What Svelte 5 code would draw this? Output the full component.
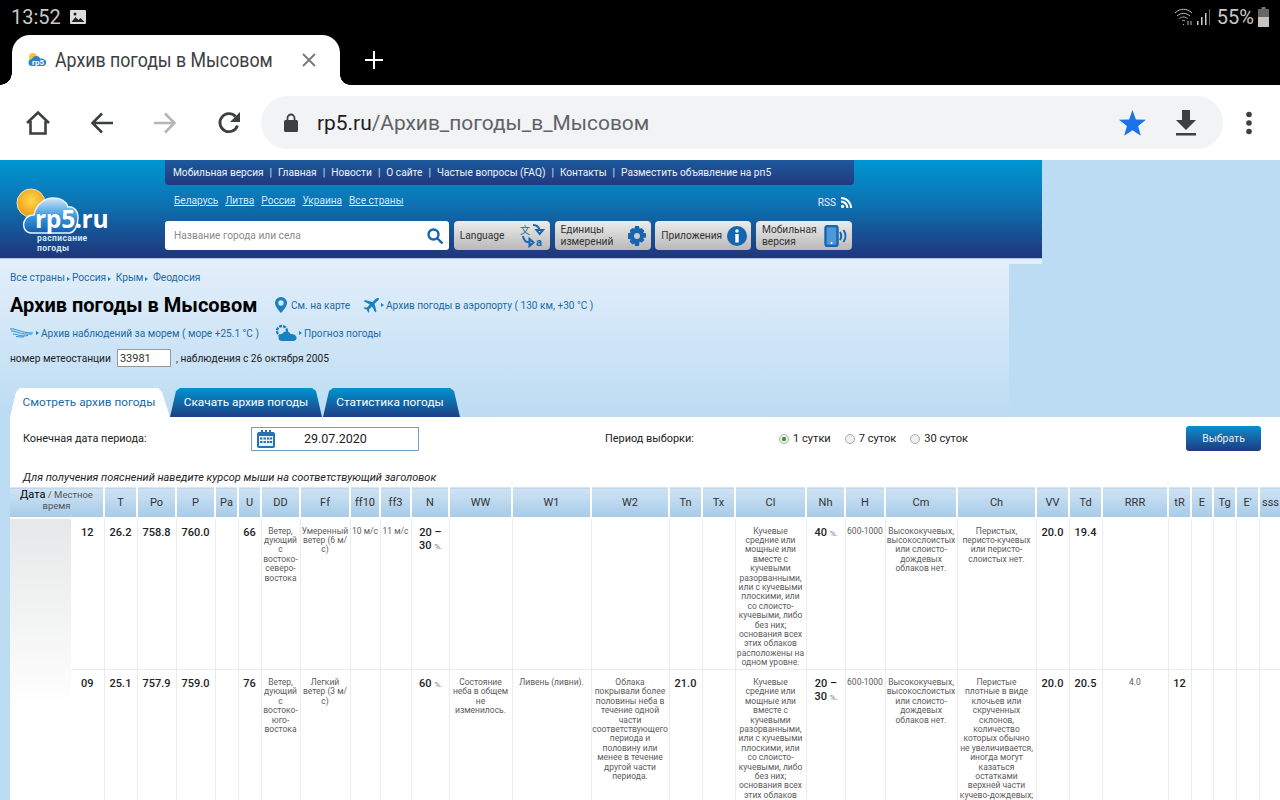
<script>
  const cols = [61, 33, 33, 39, 39, 23, 23, 39, 50, 30, 31, 38, 63, 79, 78, 33, 33, 71, 39, 40, 72, 79, 33, 33, 66, 23, 22, 23, 23, 23];
  const heads = ['T', 'Po', 'P', 'Pa', 'U', 'DD', 'Ff', 'ff10', 'ff3', 'N', 'WW', 'W1', 'W2', 'Tn', 'Tx', 'Cl', 'Nh', 'H', 'Cm', 'Ch', 'VV', 'Td', 'RRR', 'tR', 'E', 'Tg', "E'", 'sss'];

  const cl = 'Кучевые\nсредние или\nмощные или\nвместе с\nкучевыми\nразорванными,\nили с кучевыми\nплоскими, или\nсо слоисто-\nкучевыми, либо\nбез них;\nоснования всех\nэтих облаков\nрасположены на\nодном уровне.';
  const cm = 'Высококучевых,\nвысокослоистых\nили слоисто-\nдождевых\nоблаков нет.';

  // b: bold value, p: bold value with a small percent sign, anything else is small text
  const rows = [
    { hour: '12', height: 152, cells: [
      { b: '26.2' }, { b: '758.8' }, { b: '760.0' }, {}, { b: '66' },
      { t: 'Ветер,\nдующий\nс\nвостоко-\nсеверо-\nвостока' },
      { t: 'Умеренный\nветер (6 м/\nс)' },
      { t: '10 м/с' }, { t: '11 м/с' },
      { p: '20 –\n30' }, {}, {}, {}, {}, {},
      { t: cl }, { p: '40' }, { t: '600-1000' }, { t: cm },
      { t: 'Перистых,\nперисто-кучевых\nили перисто-\nслоистых нет.' },
      { b: '20.0' }, { b: '19.4' }, {}, {}, {}, {}, {}, {}
    ] },
    { hour: '09', height: 240, cells: [
      { b: '25.1' }, { b: '757.9' }, { b: '759.0' }, {}, { b: '76' },
      { t: 'Ветер,\nдующий\nс\nвостоко-\nюго-\nвостока' },
      { t: 'Легкий\nветер (3 м/\nс)' },
      {}, {},
      { p: '60' },
      { t: 'Состояние\nнеба в общем\nне\nизменилось.' },
      { t: 'Ливень (ливни).' },
      { t: 'Облака\nпокрывали более\nполовины неба в\nтечение одной\nчасти\nсоответствующего\nпериода и\nполовину или\nменее в течение\nдругой части\nпериода.' },
      { b: '21.0' }, {},
      { t: cl }, { p: '20 –\n30' }, { t: '600-1000' }, { t: cm },
      { t: 'Перистые\nплотные в виде\nклочьев или\nскрученных\nсклонов,\nколичество\nкоторых обычно\nне увеличивается,\nиногда могут\nказаться\nостатками\nверхней части\nкучево-дождевых;' },
      { b: '20.0' }, { b: '20.5' }, { t: '4.0' }, { b: '12' }, {}, {}, {}, {}
    ] }
  ];

  const topLinks = ['Мобильная версия', 'Главная', 'Новости', 'О сайте', 'Частые вопросы (FAQ)', 'Контакты', 'Разместить объявление на рп5'];
  const countries = ['Беларусь', 'Литва', 'Россия', 'Украина', 'Все страны'];
</script>

<div class="screen">
  <div class="status">
    <span class="clock">13:52</span>
    <svg width="16" height="14" viewBox="0 0 16 14"><rect width="16" height="14" rx="1" fill="#ddd"/><path d="M1.5 12l4-5 3 3 2-2 4 4z" fill="#222"/><circle cx="5" cy="4" r="1.5" fill="#222"/></svg>
    <span class="grow"></span>
    <svg width="20" height="20" viewBox="0 0 20 20" fill="none" stroke="#bbb" stroke-width="1"><path d="M1 6c5-5 12-5 17 0M3 9c4-3.500 9-3.500 13 0M5.500 11.500c2.500-2 5.500-2 8 0M8 14c1-.8 2-.8 3 0"/><path d="M9.500 17v1M14 14v4M17 14v4" stroke-width="1"/></svg>
    <svg class="bars" width="14" height="18" viewBox="0 0 14 18"><rect x="0" y="13" width="1.500" height="4" fill="#ccc"/><rect x="4" y="9" width="1.500" height="8" fill="#ccc"/><rect x="8" y="5" width="1.500" height="12" fill="#ccc"/><rect x="12" y="1" width="1" height="16" fill="#666"/></svg>
    <span class="pct">55%</span>
    <svg width="11" height="20" viewBox="0 0 11 20"><rect x="3.500" y="0" width="4" height="2" fill="#777"/><rect x="0" y="2" width="11" height="8" fill="#666"/><rect x="0" y="10" width="11" height="10" fill="#c4c4c4"/></svg>
  </div>

  <div class="tabstrip">
    <div class="browser-tab">
      <svg width="20" height="16" viewBox="0 0 20 16"><circle cx="5" cy="5" r="4" fill="#f4c23c"/><path d="M4 14a3.500 3.500 0 0 1 0-7c1-3.500 7-4 8-.5 4-.5 7 2 6 5-.5 2-2 2.500-3 2.500z" fill="#2c83c6"/><text x="4" y="13" class="fav">rp5</text></svg>
      <span class="tab-title">Архив погоды в Мысовом</span>
      <svg class="tab-x" width="14" height="14" viewBox="0 0 14 14" stroke="#777" stroke-width="1.800"><path d="M1 1l12 12M13 1L1 13"/></svg>
    </div>
    <svg class="plus" width="18" height="18" viewBox="0 0 18 18" stroke="#fff" stroke-width="2"><path d="M9 0v18M0 9h18"/></svg>
  </div>

  <div class="toolbar">
    <svg class="t-home" width="26" height="26" viewBox="0 0 26 26" fill="none" stroke="#3c4043" stroke-width="2.600"><path d="M2 13L13 2.500 24 13M5.500 11v12.500h15V11"/></svg>
    <svg class="t-back" width="24" height="22" viewBox="0 0 24 22" fill="none" stroke="#3c4043" stroke-width="2.600"><path d="M23 11H3M12 1.500L2.500 11l9.500 9.500"/></svg>
    <svg class="t-fwd" width="24" height="22" viewBox="0 0 24 22" fill="none" stroke="#b4b5b7" stroke-width="2.600"><path d="M1 11h20M12 1.500l9.500 9.500-9.500 9.500"/></svg>
    <svg class="t-reload" width="24" height="24" viewBox="0 0 24 24" fill="none"><path d="M20.500 14.500A9 9 0 1 1 18.500 5.500" stroke="#3c4043" stroke-width="2.800"/><path d="M23 1v10H13z" fill="#3c4043"/></svg>
    <div class="omnibox">
      <svg width="14" height="19" viewBox="0 0 14 19"><path d="M3.500 7V5a3.500 3.500 0 0 1 7 0v2" fill="none" stroke="#3c4043" stroke-width="1.800"/><rect y="7" width="14" height="12" rx="1.500" fill="#3c4043"/></svg>
      <span class="url"><b>rp5.ru</b>/Архив_погоды_в_Мысовом</span>
      <span class="grow"></span>
      <svg class="star" width="27" height="26" viewBox="0 0 24 23"><path d="M12 0l3 8.300 9 .4-7 5.500 2.400 8.700L12 18l-7.400 4.900L7 14.200 0 8.700l9-.4z" fill="#1a73e8"/></svg>
      <svg class="dl" width="20" height="26" viewBox="0 0 20 26" fill="#3c4043"><path d="M6 0h8v10h6l-10 10L0 10h6z"/><rect y="23" width="20" height="2.500"/></svg>
    </div>
    <svg class="t-dots" width="8" height="24" viewBox="0 0 8 24" fill="#3c4043"><circle cx="4" cy="3.500" r="2.800"/><circle cx="4" cy="12" r="2.800"/><circle cx="4" cy="20.500" r="2.800"/></svg>
  </div>

  <div class="site">
    <header class="head">
      <div class="logo">
        <svg width="90" height="62" viewBox="0 0 90 62">
          <defs>
            <radialGradient id="sun" cx="0.5" cy="0.4" r="0.6"><stop offset="0" stop-color="#ffd84a"/><stop offset="1" stop-color="#ee9a16"/></radialGradient>
            <linearGradient id="cloud" x1="0" y1="0" x2="0" y2="1"><stop offset="0" stop-color="#cfe6f8"/><stop offset="0.5" stop-color="#3f9be0"/><stop offset="1" stop-color="#0f5fb0"/></linearGradient>
          </defs>
          <circle cx="20" cy="16" r="14" fill="url(#sun)" stroke="#f6e6a8" stroke-width="1"/>
          <path d="M21 46C13 46 11 38 14 33c2-4 5-5 9-5 2-10 10-17 19-17 7 0 13 3 15 9 5-1 10 3 10 11 0 8-4 15-9 15z" fill="url(#cloud)" stroke="#e8f4fd" stroke-width="1.500"/>
        </svg>
        <span class="logo-name">rp5.ru</span>
        <span class="logo-sub">расписание<br>погоды</span>
      </div>
      <div class="head-main">
        <nav class="topnav">
          {#each topLinks as link, i}
            {#if i > 0}<span class="sep">|</span>{/if}
            <span>{link}</span>
          {/each}
        </nav>
        <div class="countries">
          {#each countries as c}<span class="country">{c}</span>{/each}
          <span class="grow"></span>
          <span class="rss">RSS</span>
          <svg width="11" height="11" viewBox="0 0 11 11" fill="#fff"><circle cx="1.600" cy="9.400" r="1.600"/><path d="M0 3.500a7.500 7.500 0 0 1 7.500 7.500H5.400A5.400 5.400 0 0 0 0 5.600zM0 0a11 11 0 0 1 11 11H9A9 9 0 0 0 0 2z"/></svg>
        </div>
        <div class="tools">
          <div class="search">
            <span class="ph">Название города или села</span>
            <svg width="16" height="16" viewBox="0 0 16 16" fill="none" stroke="#1565b0" stroke-width="2.400"><circle cx="6.500" cy="6.500" r="5"/><path d="M10 10l5.500 5.500"/></svg>
          </div>
          <div class="tool">
            <span class="tool-label">Language</span>
            <svg width="26" height="25" viewBox="0 0 26 25" fill="none" stroke="#1565b0" stroke-width="2"><text x="0" y="11" class="lang-zi">文</text><path d="M13 2c3.500 0 6 2 6.500 5.500M16.500 7H23l-3.300 4zM3 13c.5 4 3 6.500 7 6.500M9.500 16v7l4-3.500z"/><text x="16" y="23" class="lang-a">a</text></svg>
          </div>
          <div class="tool">
            <span class="tool-label two">Единицы<br>измерений</span>
            <svg width="20" height="20" viewBox="0 0 20 20"><path d="M8 0h4l.6 2.800 2-.8 2.800 2.800-1.200 2 2.800.6v4l-2.800.6 1.200 2-2.800 2.800-2-1.200L12 20H8l-.6-2.800-2 1.200-2.800-2.800 1.200-2L1 12.800V7.200l2.800-.6-1.200-2L5.400 2l2 .8z" fill="#1565b0"/><circle cx="10" cy="10" r="3" fill="#ccc"/></svg>
          </div>
          <div class="tool">
            <span class="tool-label">Приложения</span>
            <svg width="20" height="20" viewBox="0 0 20 20"><circle cx="10" cy="10" r="10" fill="#1565b0"/><circle cx="10" cy="5" r="1.800" fill="#fff"/><rect x="8.300" y="8" width="3.400" height="8.500" fill="#fff"/></svg>
          </div>
          <div class="tool">
            <span class="tool-label two">Мобильная<br>версия</span>
            <svg width="24" height="22" viewBox="0 0 24 22" fill="none"><rect x="1.500" y="1" width="12" height="20" rx="2" fill="#4f97d6" stroke="#1565b0" stroke-width="2.400"/><circle cx="7.500" cy="18" r="1" fill="#fff"/><path d="M16 7c1.500 2.500 1.500 5.500 0 8M19.500 5c2.500 3.500 2.500 8.500 0 12" stroke="#1565b0" stroke-width="2"/></svg>
          </div>
        </div>
      </div>
    </header>

    <section class="intro">
      <div class="crumbs">
        Все страны<i class="tri"></i>Россия<i class="tri"></i> Крым<i class="tri"></i> Феодосия
      </div>
      <div class="title-row">
        <h1>Архив погоды в Мысовом</h1>
        <svg class="pin" width="12" height="16" viewBox="0 0 12 16"><path fill-rule="evenodd" d="M6 0a6 6 0 0 1 6 6c0 4-6 10-6 10S0 10 0 6a6 6 0 0 1 6-6zm0 3.300a2.700 2.700 0 1 0 0 5.400 2.700 2.700 0 0 0 0-5.400z" fill="#1a80c4"/></svg>
        <span class="lnk map">См. на карте</span>
        <svg class="plane" width="16" height="15" viewBox="0 0 16 15"><path d="M16 0c-1.500-.3-3 .4-4 1.400L9.500 4 2 2 .8 3.200 6.800 6.500 4 9.500 1.500 9.300.5 10.300l3.300 1.500 1.500 3 1-1-.2-2.500 3-2.800 3.200 6 1.200-1.200-2-7.500 2.600-2.500C15.300 3 16 1.500 16 0z" fill="#1a80c4"/></svg>
        <i class="tri"></i><span class="lnk">Архив погоды в аэропорту ( 130 км, +30 °C )</span>
      </div>
      <div class="sub-row">
        <svg width="24" height="10" viewBox="0 0 24 10" fill="none" stroke="#2a8fd0" stroke-width="1"><path d="M0 1c6-1 10 4 23 4M1 3c6 0 9 4 21 3M3 6c5 0 7 3 15 1.500M6 8.500c4 0 5 1 8 .2"/></svg>
        <i class="tri"></i><span class="lnk sea">Архив наблюдений за морем ( море +25.1 °C )</span>
        <svg class="cloudy" width="22" height="18" viewBox="0 0 22 18"><circle cx="7" cy="7" r="5" fill="none" stroke="#1a80c4" stroke-width="2.400" stroke-dasharray="3 1"/><path d="M7 17a3.500 3.500 0 0 1 0-7c1-3 7-3.500 8.500 0 4-.4 6.500 2 6 4.500-.3 1.500-1.500 2.500-3 2.500z" fill="#1a80c4"/></svg>
        <i class="tri"></i><span class="lnk">Прогноз погоды</span>
      </div>
      <div class="station">
        <span>номер метеостанции</span>
        <span class="st-input">33981</span>
        <span>, наблюдения с 26 октября 2005</span>
      </div>
      <div class="tabs">
        <span class="tab active">Смотреть архив погоды</span>
        <span class="tab dl-tab">Скачать архив погоды</span>
        <span class="tab stat-tab">Статистика погоды</span>
      </div>
    </section>

    <section class="panel">
      <div class="form-row">
        <span class="f-label">Конечная дата периода:</span>
        <div class="datebox">
          <svg width="18" height="18" viewBox="0 0 18 18"><rect y="2" width="18" height="16" rx="2" fill="#2670b4"/><rect x="2" y="6" width="14" height="10" fill="#e8f2fa"/><g fill="#2670b4"><rect x="3" y="7.500" width="2.400" height="2"/><rect x="6.500" y="7.500" width="2.400" height="2"/><rect x="10" y="7.500" width="2.400" height="2"/><rect x="13" y="7.500" width="2" height="2"/><rect x="3" y="11" width="2.400" height="2"/><rect x="6.500" y="11" width="2.400" height="2"/><rect x="10" y="11" width="2.400" height="2"/><rect x="13" y="11" width="2" height="2"/><rect x="4" y="0" width="2" height="4"/><rect x="8" y="0" width="2" height="4"/><rect x="12" y="0" width="2" height="4"/></g></svg>
          <span class="date">29.07.2020</span>
        </div>
        <span class="f-label period">Период выборки:</span>
        <div class="radios">
          <span class="radio on"><i></i>1 сутки</span>
          <span class="radio"><i></i>7 суток</span>
          <span class="radio"><i></i>30 суток</span>
        </div>
        <span class="grow"></span>
        <span class="go">Выбрать</span>
      </div>
      <p class="hint">Для получения пояснений наведите курсор мыши на соответствующий заголовок</p>

      <table>
        <colgroup>
          {#each cols as w}<col style="width:{w}px">{/each}
        </colgroup>
        <thead>
          <tr>
            <th colspan="2" class="date-head"><b>Дата</b> <span>/ Местное<br>время</span></th>
            {#each heads as h}<th>{h}</th>{/each}
          </tr>
        </thead>
        <tbody>
          {#each rows as row, r}
            <tr style="height:{row.height}px">
              {#if r === 0}<td rowspan="2" class="day"></td>{/if}
              <td class="val hour">{row.hour}</td>
              {#each row.cells as c}
                {#if c.b}
                  <td class="val">{c.b}</td>
                {:else if c.p}
                  <td class="val pc">{c.p} <small>%.</small></td>
                {:else}
                  <td class="txt">{c.t ?? ''}</td>
                {/if}
              {/each}
            </tr>
          {/each}
        </tbody>
      </table>
    </section>
  </div>
</div>

<style>
  :global(body) {
    margin: 0;
    background: #000;
  }

  .screen {
    width: 1280px;
    height: 800px;
    overflow: hidden;
    font-family: Roboto, "Liberation Sans", sans-serif;
    position: relative;
  }

  .grow {
    flex: 1;
  }

  .status {
    height: 35px;
    background: #000;
    color: #c8c8c8;
    display: flex;
    align-items: center;
    padding: 0 11px 2px 11px;
    box-sizing: border-box;
  }

  .clock {
    font-size: 20px;
    margin-right: 9px;
  }

  .bars {
    margin-left: 3px;
  }

  .pct {
    font-size: 20px;
    margin: 0 4px 0 6px;
  }

  .tabstrip {
    height: 50px;
    background: #000;
    display: flex;
    align-items: center;
    padding-left: 12px;
  }

  .browser-tab {
    width: 328px;
    height: 50px;
    background: #fff;
    border-radius: 18px 18px 0 0;
    display: flex;
    align-items: center;
    padding: 0 24px 0 16px;
    box-sizing: border-box;
    position: relative;
  }

  .browser-tab::before,
  .browser-tab::after {
    content: "";
    position: absolute;
    bottom: 0;
    width: 12px;
    height: 12px;
  }

  .browser-tab::before {
    left: -12px;
    background: radial-gradient(circle at 0 0, #000 11.500px, #fff 12px);
  }

  .browser-tab::after {
    right: -10px;
    width: 10px;
    height: 10px;
    background: radial-gradient(circle at 100% 0, #000 9.500px, #fff 10px);
  }

  .fav {
    font-size: 8px;
    font-weight: 700;
    fill: #fff;
  }

  .tab-title {
    font-size: 19.500px;
    color: #3c4043;
    margin-left: 7px;
    white-space: nowrap;
    flex: 1;
    transform: scaleX(0.91);
    transform-origin: left center;
  }

  .plus {
    margin-left: 25px;
  }

  .toolbar {
    height: 75px;
    background: #fff;
    display: flex;
    align-items: center;
    padding-left: 25px;
    box-sizing: border-box;
  }

  .t-back {
    margin-left: 39px;
  }

  .t-fwd {
    margin-left: 39px;
  }

  .t-reload {
    margin-left: 40px;
  }

  .omnibox {
    margin-left: 20px;
    width: 962px;
    height: 53px;
    background: #f1f3f4;
    border-radius: 27px;
    display: flex;
    align-items: center;
    padding: 0 27px 0 23px;
    box-sizing: border-box;
  }

  .url {
    font-size: 20.900px;
    color: #5f6368;
    margin-left: 19px;
    white-space: nowrap;
  }

  .url b {
    font-weight: 400;
    color: #202124;
  }

  .star {
    margin-right: 30px;
  }

  .t-dots {
    margin-left: 22px;
  }

  .site {
    background: #bcdcf3;
    height: 640px;
  }

  .head {
    width: 1042px;
    height: 98px;
    background: linear-gradient(#0096d3 0, #0d72b2 45%, #20357b 100%);
    border-bottom: 1px solid #a9c6ea;
    display: flex;
    position: relative;
  }

  .logo {
    width: 165px;
    position: relative;
    flex: none;
  }

  .logo svg {
    position: absolute;
    left: 11px;
    top: 27px;
  }

  .logo-name {
    position: absolute;
    left: 35px;
    top: 43px;
    font-size: 24.600px;
    line-height: 32px;
    font-weight: 700;
    color: #fff;
    font-family: "Open Sans", Roboto, sans-serif;
    letter-spacing: -0.3px;
  }

  .logo-sub {
    position: absolute;
    left: 37px;
    top: 74px;
    font-size: 8.500px;
    line-height: 9.500px;
    font-weight: 700;
    letter-spacing: 0.4px;
    color: #d8e8f5;
  }

  .head-main {
    width: 689px;
    display: flex;
    flex-direction: column;
  }

  .topnav {
    height: 25px;
    background: linear-gradient(#1b5a9c, #22387d);
    border-radius: 0 0 4px 4px;
    display: flex;
    align-items: center;
    gap: 6px;
    padding-left: 8px;
    font-size: 10.170px;
    color: #eef4fa;
    white-space: nowrap;
  }

  .sep {
    color: #dde8f3;
  }

  .countries {
    height: 36px;
    display: flex;
    align-items: center;
    gap: 8px;
    padding: 0 2px 6px 9px;
    box-sizing: border-box;
    font-size: 10.120px;
    color: #d6e8f6;
  }

  .country {
    text-decoration: underline;
    text-underline-offset: 1px;
    margin-right: -1px;
  }

  .rss {
    color: #e4eff8;
    margin-right: -3px;
    padding-top: 4px;
  }

  .countries svg {
    margin-top: 4px;
  }

  .tools {
    display: flex;
    gap: 4.750px;
    height: 29px;
  }

  .search {
    width: 284px;
    background: #fff;
    border-radius: 3px;
    display: flex;
    align-items: center;
    justify-content: space-between;
    padding: 0 6px 0 9px;
    box-sizing: border-box;
  }

  .ph {
    font-size: 10.200px;
    color: #8a8a8a;
  }

  .tool {
    width: 96px;
    background: linear-gradient(#ececec, #b9b9b9);
    border-radius: 4px;
    display: flex;
    align-items: center;
    justify-content: space-between;
    padding: 0 4px 0 6px;
    box-sizing: border-box;
    font-size: 10.200px;
    color: #333;
  }

  .tool-label.two {
    line-height: 12px;
  }

  .lang-a {
    font-size: 11px;
    font-weight: 700;
    fill: #1565b0;
    stroke: none;
  }

  .lang-zi {
    font-family: "Noto Sans CJK SC", sans-serif;
    font-size: 10px;
    fill: #1565b0;
    stroke: none;
  }

  .intro {
    width: 1009px;
    height: 158px;
    padding: 7px 0 0 10px;
    background: linear-gradient(#e2eefa, #bcdcf3);
    border-top: 5px solid #e2eefa;
    box-sizing: border-box;
    position: relative;
  }

  .intro::after {
    content: "";
    position: absolute;
    left: 1009px;
    top: -5px;
    width: 33px;
    height: 5px;
    background: #e2eefa;
  }

  .crumbs {
    font-size: 10.200px;
    color: #1a6ba5;
    height: 13px;
    line-height: 13px;
  }

  .tri {
    display: inline-block;
    width: 0;
    height: 0;
    border-left: 3px solid #1a80c4;
    border-top: 2.500px solid transparent;
    border-bottom: 2.500px solid transparent;
    margin: 0 2px 0 2px;
  }

  .title-row {
    display: flex;
    align-items: center;
    height: 30px;
    margin-top: 6px;
  }

  h1 {
    font-size: 20px;
    font-weight: 700;
    margin: 0;
    color: #000;
    white-space: nowrap;
    width: 249px;
  }

  .pin {
    margin-left: 16px;
  }

  .lnk {
    font-size: 10.100px;
    color: #1a6ba5;
    white-space: nowrap;
  }

  .map {
    margin-left: 4px;
    width: 67px;
  }

  .plane {
    margin-left: 5px;
    margin-right: 0;
  }

  .sub-row {
    display: flex;
    align-items: center;
    height: 22px;
    margin-top: 2px;
  }

  .sea {
    width: 230px;
  }

  .cloudy {
    margin-left: 4px;
  }

  .station {
    display: flex;
    align-items: center;
    height: 18px;
    margin-top: 5px;
    font-size: 10.200px;
    color: #222;
  }

  .st-input {
    width: 54px;
    height: 18px;
    line-height: 18px;
    background: #fff;
    border: 1px solid #999;
    box-sizing: border-box;
    padding-left: 2px;
    margin: 0 5px 0 6px;
    font-size: 11px;
    color: #333;
  }

  .tabs {
    position: absolute;
    left: 10px;
    bottom: 0;
    display: flex;
    height: 29px;
  }

  .tab {
    height: 29px;
    line-height: 29px;
    font-size: 11.800px;
    text-align: center;
    color: #fff;
    background: linear-gradient(#0093d0, #1f3f85);
    box-sizing: border-box;
    white-space: nowrap;
  }

  .active {
    width: 160px;
    background: #fff;
    color: #1a6ba5;
    clip-path: polygon(0 100%, 6px 4px, 10px 0, 148px 0, 152px 4px, 160px 100%);
    padding-right: 2px;
  }

  .dl-tab {
    width: 152px;
    clip-path: polygon(0 100%, 6px 3px, 10px 0, 142px 0, 146px 3px, 152px 100%);
  }

  .stat-tab {
    width: 137px;
    margin-left: 1px;
    padding-right: 3px;
    clip-path: polygon(0 100%, 6px 3px, 10px 0, 127px 0, 131px 3px, 137px 100%);
  }

  .panel {
    margin-left: 10px;
    width: 1270px;
    height: 400px;
    background: #fff;
    overflow: hidden;
  }

  .form-row {
    display: flex;
    align-items: center;
    height: 25px;
    padding: 9px 19px 0 13px;
    font-size: 10.900px;
    color: #222;
  }

  .f-label {
    white-space: nowrap;
  }

  .f-label:first-child {
    width: 228px;
  }

  .datebox {
    width: 168px;
    height: 24px;
    border: 1px solid #6f9fc6;
    box-sizing: border-box;
    display: flex;
    align-items: center;
    padding-left: 5px;
  }

  .date {
    margin-left: 29px;
    font-size: 12.500px;
    color: #222;
  }

  .period {
    margin-left: 186px;
    width: 174px;
  }

  .radios {
    display: flex;
    gap: 14px;
    font-size: 11.100px;
  }

  .radio {
    display: flex;
    align-items: center;
    gap: 4px;
    white-space: nowrap;
  }

  .radio i {
    width: 8px;
    height: 8px;
    border: 1px solid #aaa;
    border-radius: 50%;
    background: #f1f1f1;
    box-sizing: content-box;
  }

  .radio.on i {
    background: radial-gradient(circle, #3a9a3a 2px, #f1f1f1 2.500px);
  }

  .go {
    width: 75px;
    height: 25px;
    line-height: 25px;
    text-align: center;
    border-radius: 3px;
    background: linear-gradient(#0a8fce, #1f3a80);
    color: #e8f0f8;
    font-size: 10.500px;
  }

  .hint {
    margin: 20px 0 3px 13px;
    height: 13px;
    line-height: 13px;
    font-size: 10.950px;
    font-style: italic;
    color: #222;
    white-space: nowrap;
  }

  table {
    table-layout: fixed;
    width: 1272px;
    border-collapse: collapse;
  }

  th {
    height: 30px;
    padding: 0;
    font-size: 11px;
    font-weight: 400;
    color: #333;
    background: linear-gradient(#cfe3f4, #a6cbe8);
    border: 1px solid #fff;
    border-width: 0 2px 2px 0;
    border-top: 1px solid #e4e4e4;
    box-sizing: border-box;
  }

  .date-head {
    font-size: 9.500px;
    line-height: 11px;
    color: #555;
    vertical-align: top;
    padding-top: 1px;
  }

  .date-head b {
    font-size: 11px;
    font-weight: 400;
    color: #000;
  }

  td {
    border: 1px solid #ececec;
    border-width: 0 1px 1px 0;
    vertical-align: top;
    text-align: center;
    padding: 0;
  }

  .day {
    background: linear-gradient(#e6e7e8, #fff 190px);
    border: 0;
  }

  .val {
    font-size: 11px;
    font-weight: 500;
    line-height: 13px;
    color: #222;
    padding-top: 7px;
    white-space: pre-line;
  }

  .val small {
    font-size: 8px;
    font-weight: 400;
    color: #777;
  }

  .pc {
    padding-left: 1px;
  }

  .txt {
    font-size: 8.500px;
    line-height: 9.400px;
    color: #5c5c5c;
    padding-top: 8px;
    white-space: pre-line;
  }
</style>
